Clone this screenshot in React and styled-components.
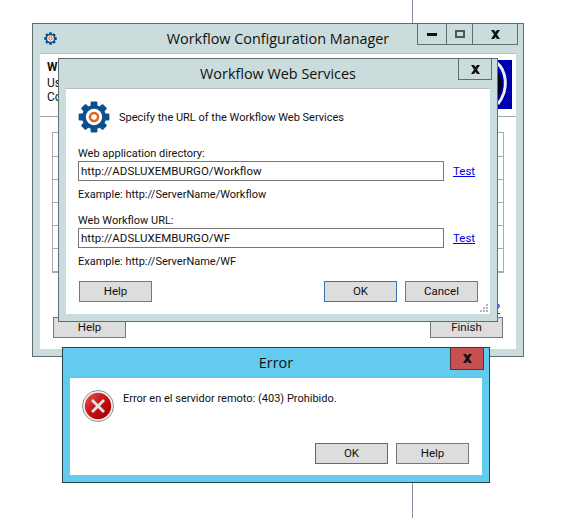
import styled, { createGlobalStyle } from 'styled-components';

const GlobalStyle = createGlobalStyle`
  html, body {
    margin: 0;
    padding: 0;
    background: #fff;
    overflow: hidden;
  }
  * {
    box-sizing: border-box;
  }
`;

const Desktop = styled.div`
  position: relative;
  width: 574px;
  height: 518px;
  background: #fff;
  font-family: Roboto, 'Liberation Sans', sans-serif;
  font-size: 11px;
  color: #111;
`;

// the thin line behind the windows
const Backdrop = styled.div`
  position: absolute;
  left: 412px;
  top: 0;
  width: 1px;
  height: 518px;
  background: #8b8ba0;
`;

// windows sit on a free desktop, so their place is given by props
const Window = styled.section`
  position: absolute;
  left: ${(p) => p.$x}px;
  top: ${(p) => p.$y}px;
  width: ${(p) => p.$w}px;
  height: ${(p) => p.$h}px;
  display: flex;
  flex-direction: column;
  background: ${(p) => (p.$error ? '#63cbee' : '#cadcdc')};
  border: 1px solid ${(p) => (p.$error ? '#27404a' : '#5f6f6f')};
`;

const TitleBar = styled.header`
  height: 29px;
  flex-shrink: 0;
  display: grid;
  grid-template-columns: 1fr auto 1fr;
  padding: 0 5px;
`;

const TitleIcon = styled.div`
  display: flex;
  align-items: center;
  height: 28px;
  padding-left: 6px;
`;

const Title = styled.h1`
  grid-column: 2;
  margin: 0;
  font-family: 'Open Sans', 'Liberation Sans', sans-serif;
  font-weight: 400;
  font-size: 14.4px;
  line-height: 29px;
  white-space: nowrap;
`;

const Controls = styled.div`
  grid-column: 3;
  justify-self: end;
  display: flex;
  height: 21px;
  border: 1px solid #5f6f6f;
  border-top: none;
`;

const Control = styled.div`
  width: ${(p) => p.$w}px;
  display: flex;
  align-items: center;
  justify-content: center;
  & + & {
    border-left: 1px solid #5f6f6f;
  }
`;

const DangerControls = styled(Controls)`
  height: 22px;
  background: #c75050;
  border-color: #5c3232;
`;

const Body = styled.div`
  flex: 1;
  min-height: 0;
  display: flex;
  flex-direction: column;
  margin: 0 7px 7px;
  background: #fff;
  border-top: 1px solid ${(p) => (p.$error ? '#8fb0c4' : '#b6bcc8')};
`;

// main window
const Banner = styled.div`
  height: 63px;
  flex-shrink: 0;
  display: flex;
  justify-content: space-between;
  padding: 6px 4px 7px 7px;
  border-bottom: 1px solid #a8a8a8;
  font-size: 12px;
`;

const BannerText = styled.div`
  display: flex;
  flex-direction: column;
  line-height: 14px;
  strong {
    font-weight: 700;
    margin-bottom: 2px;
  }
`;

const StepTable = styled.div`
  margin: 15px 12px 0;
  border: 1px solid #ababab;
  border-bottom-width: 2px;
`;

const StepRow = styled.div`
  height: 23px;
  & + & {
    border-top: 1px solid #ababab;
  }
`;

const MainFooter = styled.div`
  margin-top: auto;
  display: flex;
  justify-content: space-between;
  align-items: flex-end;
  padding: 0 13px 11px 13px;
`;

const HiddenLink = styled.a`
  color: #0000ee;
  text-decoration: underline;
  margin-right: 3px;
`;

const FooterRight = styled.div`
  display: flex;
  flex-direction: column;
  align-items: flex-end;
  line-height: 13px;
  gap: 2px;
`;

// dialog content
const DialogBody = styled(Body)`
  padding: 11px 12px 12px;
  position: relative;
`;

const Intro = styled.div`
  display: flex;
  align-items: center;
  gap: 9px;
  height: 33px;
  margin-bottom: 11px;
  span {
    padding-top: 2px;
  }
`;

const FieldLabel = styled.div`
  line-height: 19px;
  margin-bottom: -2px;
`;

const FieldRow = styled.div`
  display: flex;
  align-items: center;
  gap: 9px;
`;

const UrlInput = styled.div`
  width: 366px;
  height: 20px;
  border: 1px solid #777;
  padding: 0 2px;
  line-height: 18px;
  font-size: 11.5px;
  background: #fff;
`;

const TestLink = styled.a`
  color: #0000ee;
  text-decoration: underline;
  font-size: 11.5px;
  line-height: 14px;
`;

const Example = styled.div`
  line-height: 16px;
  margin: 6px 0 ${(p) => p.$gap}px;
`;

const ButtonRow = styled.div`
  display: flex;
  justify-content: ${(p) => (p.$end ? 'flex-end' : 'space-between')};
  gap: 8px;
  padding: ${(p) => p.$pad};
  margin-top: auto;
`;

const ButtonGroup = styled.div`
  display: flex;
  gap: 8px;
`;

const Button = styled.button`
  width: 73px;
  height: 21px;
  padding: 0 0 1px;
  border: 1px solid ${(p) => (p.$focused ? '#3176b4' : '#777')};
  background: #dddddd;
  font-family: inherit;
  font-size: 11.5px;
  line-height: 17px;
  color: #111;
`;

const Grip = styled.svg`
  position: absolute;
  right: 2px;
  bottom: 2px;
`;

// error content
const ErrorMessage = styled.div`
  display: flex;
  gap: 9px;
  padding: 12px 12px 0;
  line-height: 17px;
`;

const Gear = ({ size }) => {
  const teeth = [0, 45, 90, 135, 180, 225, 270, 315];
  return (
    <svg width={size} height={size} viewBox="0 0 32 32">
      {teeth.map((a) => (
        <rect
          key={a}
          x="12.6"
          y="0.6"
          width="6.8"
          height="7"
          rx="1.2"
          fill="#0d4f8c"
          transform={`rotate(${a} 16 16)`}
        />
      ))}
      <circle cx="16" cy="16" r="12" fill="#0d4f8c" />
      <circle cx="16" cy="16" r="8.2" fill="#fff" />
      <circle cx="16" cy="16" r="5.3" fill="#e0651c" />
      <circle cx="16" cy="16" r="2.8" fill="#fff" />
    </svg>
  );
};

const CloseGlyph = () => (
  <svg width="11" height="9" viewBox="0 0 11 9">
    <path d="M1 0h3l1.500 2L7 0h3L7 4.500 10 9H7L5.500 7 4 9H1l3-4.500z" fill="#111" />
  </svg>
);

const ErrorIcon = () => (
  <svg width="32" height="32" viewBox="0 0 32 32">
    <defs>
      <linearGradient id="errFill" x1="0" y1="0" x2="1" y2="1">
        <stop offset="0" stopColor="#e8555a" />
        <stop offset="0.5" stopColor="#c40f14" />
        <stop offset="1" stopColor="#9c0000" />
      </linearGradient>
    </defs>
    <circle cx="16" cy="16" r="15.5" fill="#f2f2f2" stroke="#8f8f8f" />
    <circle cx="16" cy="16" r="13.2" fill="url(#errFill)" />
    <path
      d="M11 9l5 5 5-5 2 2-5 5 5 5-2 2-5-5-5 5-2-2 5-5-5-5z"
      fill="#e9e4e4"
    />
  </svg>
);

const BannerLogo = () => (
  <svg width="38" height="49" viewBox="0 0 38 49">
    <defs>
      <pattern id="dither" width="2" height="2" patternUnits="userSpaceOnUse">
        <rect width="2" height="2" fill="#000" />
        <rect width="1" height="1" fill="#0000b8" />
        <rect x="1" y="1" width="1" height="1" fill="#0000b8" />
      </pattern>
    </defs>
    <rect width="38" height="49" fill="url(#dither)" />
    <path d="M22 2c10 8 14 26 2 42" fill="none" stroke="#ececec" strokeWidth="3" />
    <path d="M23 14c4 6 4 14 1 20" fill="none" stroke="#000" strokeWidth="3" />
  </svg>
);

const App = () => {
  const steps = [1, 2, 3, 4, 5, 6];

  return (
    <Desktop>
      <GlobalStyle />
      <Backdrop />

      <Window $x={32} $y={23} $w={492} $h={334}>
        <TitleBar>
          <TitleIcon>
            <Gear size={13} />
          </TitleIcon>
          <Title>Workflow Configuration Manager</Title>
          <Controls>
            <Control $w={28}>
              <svg width="10" height="3" viewBox="0 0 10 3">
                <rect width="10" height="3" fill="#111" />
              </svg>
            </Control>
            <Control $w={26}>
              <svg width="10" height="8" viewBox="0 0 10 8">
                <rect x="1" y="1" width="8" height="6" fill="none" stroke="#555" strokeWidth="2" />
              </svg>
            </Control>
            <Control $w={45}>
              <CloseGlyph />
            </Control>
          </Controls>
        </TitleBar>
        <Body>
          <Banner>
            <BannerText>
              <strong>W</strong>
              <span>Us</span>
              <span>Co</span>
            </BannerText>
            <BannerLogo />
          </Banner>
          <StepTable>
            {steps.map((s) => (
              <StepRow key={s} />
            ))}
          </StepTable>
          <MainFooter>
            <Button>Help</Button>
            <FooterRight>
              <HiddenLink>?</HiddenLink>
              <Button>Finish</Button>
            </FooterRight>
          </MainFooter>
        </Body>
      </Window>

      <Window $x={58} $y={58} $w={440} $h={264}>
        <TitleBar>
          <Title>Workflow Web Services</Title>
          <Controls>
            <Control $w={32}>
              <CloseGlyph />
            </Control>
          </Controls>
        </TitleBar>
        <DialogBody>
          <Intro>
            <Gear size={32} />
            <span>Specify the URL of the Workflow Web Services</span>
          </Intro>
          <FieldLabel>Web application directory:</FieldLabel>
          <FieldRow>
            <UrlInput>http://ADSLUXEMBURGO/Workflow</UrlInput>
            <TestLink>Test</TestLink>
          </FieldRow>
          <Example $gap={8}>Example: http://ServerName/Workflow</Example>
          <FieldLabel>Web Workflow URL:</FieldLabel>
          <FieldRow>
            <UrlInput>http://ADSLUXEMBURGO/WF</UrlInput>
            <TestLink>Test</TestLink>
          </FieldRow>
          <Example $gap={0}>Example: http://ServerName/WF</Example>
          <ButtonRow $pad="0 0 0 1px">
            <Button>Help</Button>
            <ButtonGroup>
              <Button $focused>OK</Button>
              <Button>Cancel</Button>
            </ButtonGroup>
          </ButtonRow>
          <Grip width="8" height="8" viewBox="0 0 8 8">
            <g fill="#b4b4b4">
              <rect x="6" y="0" width="2" height="2" />
              <rect x="3" y="3" width="2" height="2" />
              <rect x="6" y="3" width="2" height="2" />
              <rect x="0" y="6" width="2" height="2" />
              <rect x="3" y="6" width="2" height="2" />
              <rect x="6" y="6" width="2" height="2" />
            </g>
          </Grip>
        </DialogBody>
      </Window>

      <Window $error $x={62} $y={347} $w={428} $h={136}>
        <TitleBar>
          <Title>Error</Title>
          <DangerControls>
            <Control $w={32}>
              <CloseGlyph />
            </Control>
          </DangerControls>
        </TitleBar>
        <Body $error>
          <ErrorMessage>
            <ErrorIcon />
            <div>Error en el servidor remoto: (403) Prohibido.</div>
          </ErrorMessage>
          <ButtonRow $end $pad="0 13px 11px 0">
            <Button $focused>OK</Button>
            <Button>Help</Button>
          </ButtonRow>
        </Body>
      </Window>
    </Desktop>
  );
};

export default App;
